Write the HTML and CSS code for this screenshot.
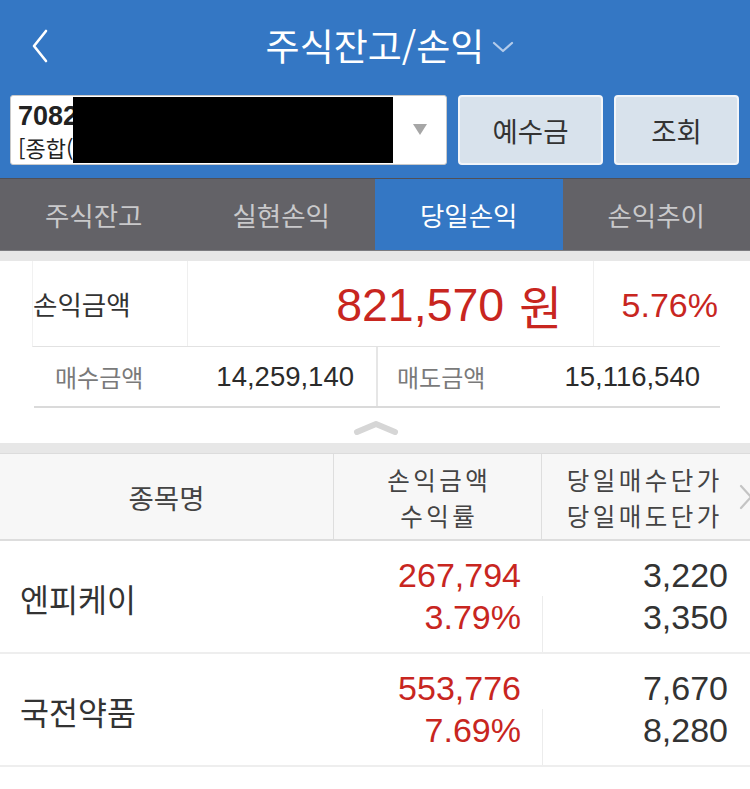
FILE: index.html
```html
<!DOCTYPE html>
<html lang="ko">
<head>
<meta charset="utf-8">
<title>주식잔고/손익</title>
<link rel="stylesheet" href="styles.css">
</head>
<body>
<div class="app">
  <header class="topbar">
    <div class="titlebar">
      <svg class="back" width="18" height="34" viewBox="0 0 18 34"><polyline points="15,2 3,17 15,32" fill="none" stroke="#fff" stroke-width="2.6" stroke-linecap="round" stroke-linejoin="round"/></svg>
      <h1 class="title">주식잔고/손익<svg class="title-caret" width="22" height="12" viewBox="0 0 22 12"><polyline points="2,2 11,10 20,2" fill="none" stroke="#b3cbea" stroke-width="2.2" stroke-linecap="round" stroke-linejoin="round"/></svg></h1>
    </div>
    <div class="account-row">
      <div class="account">
        <div class="acc-no">7082</div>
        <div class="acc-type">[종합(</div>
        <div class="redact"></div>
        <span class="acc-caret"></span>
      </div>
      <button class="btn btn-deposit">예수금</button>
      <button class="btn btn-query">조회</button>
    </div>
  </header>

  <nav class="tabs">
    <div class="tab">주식잔고</div>
    <div class="tab">실현손익</div>
    <div class="tab active">당일손익</div>
    <div class="tab">손익추이</div>
  </nav>
  <div class="strip strip-top"></div>

  <section class="summary">
    <div class="sum-main">
      <div class="sum-label">손익금액</div>
      <div class="sum-amount"><span class="amt-num">821,570</span><span class="amt-unit">원</span></div>
      <div class="sum-rate">5.76%</div>
    </div>
    <div class="sum-sub">
      <div class="sub-cell">
        <span class="sub-label">매수금액</span>
        <span class="sub-value">14,259,140</span>
      </div>
      <div class="sub-cell sub-cell-right">
        <span class="sub-label">매도금액</span>
        <span class="sub-value">15,116,540</span>
      </div>
    </div>
    <div class="collapse">
      <svg width="46" height="16" viewBox="0 0 46 16"><polyline points="4,12 23,4 42,12" fill="none" stroke="#d6d6d6" stroke-width="6" stroke-linecap="round" stroke-linejoin="round"/></svg>
    </div>
  </section>
  <div class="strip strip-mid"></div>

  <section class="grid">
    <div class="grid-head">
      <div class="hcell hcell-first">종목명</div>
      <div class="hcell hcell-mid">
        <span class="hline">손익금액</span>
        <span class="hline">수익률</span>
      </div>
      <div class="hcell hcell-last">
        <span class="hline">당일매수단가</span>
        <span class="hline">당일매도단가</span>
      </div>
      <svg class="more" width="16" height="26" viewBox="0 0 16 26"><polyline points="3,2 13,13 3,24" fill="none" stroke="#c4c4c4" stroke-width="2.2" stroke-linecap="round" stroke-linejoin="round"/></svg>
    </div>

    <div class="grid-row">
      <div class="cell name">엔피케이</div>
      <div class="cell pair">
        <div class="half top red">267,794</div>
        <div class="half bottom red">3.79%</div>
      </div>
      <div class="cell pair last">
        <div class="half top">3,220</div>
        <div class="half bottom divided">3,350</div>
      </div>
    </div>

    <div class="grid-row">
      <div class="cell name">국전약품</div>
      <div class="cell pair">
        <div class="half top red">553,776</div>
        <div class="half bottom red">7.69%</div>
      </div>
      <div class="cell pair last">
        <div class="half top">7,670</div>
        <div class="half bottom divided">8,280</div>
      </div>
    </div>
  </section>
</div>
</body>
</html>
```

FILE: styles.css
```css
* { box-sizing: border-box; }

html, body {
  margin: 0;
  padding: 0;
  background: #ffffff;
}

body {
  font-family: "Liberation Sans", "Noto Sans CJK KR", sans-serif;
  color: #333333;
}

.app {
  width: 750px;
}

/* ---------- top bar ---------- */
.topbar {
  background: #3477c4;
  height: 178px;
  display: flex;
  flex-direction: column;
}

.titlebar {
  position: relative;
  height: 90px;
  display: flex;
  align-items: center;
  justify-content: center;
}

.back {
  position: absolute;
  left: 31px;
  top: 29px;
}

.title {
  position: relative;
  margin: 0;
  font-weight: normal;
  font-size: 37px;
  line-height: 50px;
  color: #ffffff;
  font-family: "Noto Sans CJK KR", sans-serif;
}

.title-caret {
  position: absolute;
  left: calc(100% + 8px);
  top: 21px;
}

.account-row {
  display: flex;
  gap: 11px;
  padding: 5px 10px 0 10px;
  height: 75px;
}

.account {
  position: relative;
  width: 437px;
  height: 70px;
  background: #ffffff;
  border: 1px solid #c9c9c9;
  border-radius: 3px;
  padding: 4px 0 0 7px;
}

.acc-no {
  font-weight: bold;
  font-size: 27px;
  line-height: 32px;
  color: #222;
}

.acc-type {
  font-size: 22px;
  line-height: 30px;
  color: #222;
  font-family: "Noto Sans CJK KR", sans-serif;
}

.redact {
  position: absolute;
  left: 62px;
  top: 1px;
  width: 320px;
  height: 66px;
  background: #000;
}

.acc-caret {
  position: absolute;
  left: 402px;
  top: 28px;
  width: 0;
  height: 0;
  border-left: 7px solid transparent;
  border-right: 7px solid transparent;
  border-top: 11px solid #a6a6a6;
}

.btn {
  height: 70px;
  background: #d8e2ec;
  border: 2px solid #f2f5f9;
  border-radius: 4px;
  font-family: "Noto Sans CJK KR", sans-serif;
  font-size: 27.5px;
  color: #333;
  padding: 0;
}

.btn-deposit { width: 145px; }
.btn-query { width: 125px; }

/* ---------- tabs ---------- */
.tabs {
  display: flex;
  height: 73px;
  background: #636267;
  border-top: 1px solid #505056;
  border-bottom: 1px solid #7c7c80;
}

.tab {
  flex: 1;
  display: flex;
  align-items: center;
  justify-content: center;
  font-family: "Noto Sans CJK KR", sans-serif;
  font-size: 26.5px;
  color: #c9c9cb;
}

.tab.active {
  background: #3477c4;
  color: #ffffff;
}

.strip {
  background: #e7e7e7;
}
.strip-top { height: 10px; }
.strip-mid { height: 11px; border-bottom: 1px solid #dcdcdc; }

/* ---------- summary ---------- */
.summary {
  background: #fff;
  padding: 0 30px 0 32px;
}

.sum-main {
  display: flex;
  height: 86px;
  border-left: 1px solid #f1f1f1;
  border-bottom: 1px solid #e2e2e2;
}

.sum-label {
  width: 155px;
  display: flex;
  align-items: center;
  font-family: "Noto Sans CJK KR", sans-serif;
  font-size: 26.5px;
  color: #333;
  border-right: 1px solid #efefef;
}

.sum-amount {
  width: 406px;
  display: flex;
  align-items: center;
  justify-content: flex-end;
  gap: 15px;
  padding-right: 31px;
  padding-top: 2px;
  font-size: 46.5px;
  color: #c8261f;
  border-right: 1px solid #efefef;
}

.sum-rate {
  flex: 1;
  display: flex;
  align-items: center;
  justify-content: flex-end;
  padding-right: 2px;
  padding-top: 4px;
  font-size: 34px;
  color: #c8261f;
}

.sum-sub {
  display: flex;
  height: 61px;
  margin-left: 2px;
  border-bottom: 2px solid #dadada;
}

.sub-cell {
  width: 344px;
  display: flex;
  align-items: center;
  justify-content: space-between;
  padding: 0 22px 0 21px;
  border-right: 2px solid #e6e6e6;
}

.sub-cell-right {
  flex: 1;
  border-right: none;
  padding: 0 20px 0 19px;
}

.sub-label {
  font-family: "Noto Sans CJK KR", sans-serif;
  font-size: 24px;
  color: #7a7a7a;
}

.sub-value {
  font-size: 27.5px;
  color: #2b2b2b;
}

.collapse {
  height: 35px;
  display: flex;
  justify-content: center;
  padding-top: 12px;
}

/* ---------- grid ---------- */
.grid {
  background: #fff;
}

.grid-head {
  position: relative;
  display: flex;
  height: 87px;
  background: #f7f7f7;
  border-bottom: 2px solid #dddddd;
}

.hcell {
  display: flex;
  flex-direction: column;
  align-items: center;
  justify-content: center;
  text-align: center;
  font-family: "Noto Sans CJK KR", sans-serif;
  color: #444;
}

.hcell-first {
  width: 333px;
  font-size: 27.5px;
}

.hline {
  display: block;
  font-size: 24.5px;
  line-height: 36px;
  letter-spacing: 3.5px;
  margin-right: -3.5px;
}

.hcell-mid {
  width: 209px;
  border-left: 1px solid #dedede;
  border-right: 1px solid #dedede;
  padding-top: 2px;
}

.hcell-last {
  flex: 1;
  padding-top: 2px;
  padding-right: 6px;
}

.more {
  position: absolute;
  right: -4px;
  top: 30px;
}

.grid-row {
  display: flex;
  height: 113px;
  border-bottom: 2px solid #eeeeee;
}

.cell {
  display: flex;
}

.name {
  width: 333px;
  align-items: center;
  padding-left: 20px;
  padding-top: 2px;
  font-family: "Noto Sans CJK KR", sans-serif;
  font-size: 31.5px;
  color: #333;
}

.pair {
  flex-direction: column;
  width: 209px;
}

.pair.last {
  flex: 1;
}

.half {
  flex: 1;
  display: flex;
  justify-content: flex-end;
  font-size: 34px;
  line-height: 39px;
  color: #333;
  padding-right: 21px;
}

.last .half {
  padding-right: 22px;
}

.half.top {
  align-items: flex-end;
  padding-bottom: 1px;
}

.half.bottom {
  align-items: flex-start;
  padding-top: 2px;
}

.half.divided {
  border-left: 1px solid #ececec;
}

.red {
  color: #c8261f;
}
```
